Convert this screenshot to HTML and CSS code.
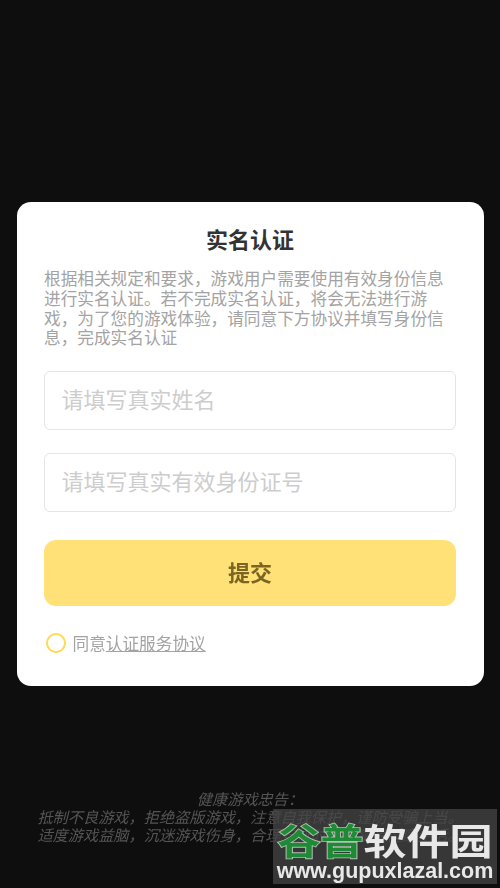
FILE: index.html
```html
<!DOCTYPE html>
<html lang="zh-CN">
<head>
<meta charset="utf-8">
<title>实名认证</title>
<link rel="stylesheet" href="styles.css">
</head>
<body>
<main class="screen">
  <section class="card">
    <h1 class="title">实名认证</h1>
    <p class="intro">根据相关规定和要求，游戏用户需要使用有效身份信息进行实名认证。若不完成实名认证，将会无法进行游戏，为了您的游戏体验，请同意下方协议并填写身份信息，完成实名认证</p>
    <input class="field" type="text" placeholder="请填写真实姓名">
    <input class="field field-second" type="text" placeholder="请填写真实有效身份证号">
    <button class="submit" type="button">提交</button>
    <div class="agree">
      <span class="radio"></span>
      <span>同意<span class="link">认证服务协议</span></span>
    </div>
  </section>
  <footer class="notice">
    <p>健康游戏忠告：</p>
    <p>抵制不良游戏，拒绝盗版游戏，注意自我保护，谨防受骗上当。</p>
    <p>适度游戏益脑，沉迷游戏伤身，合理安排时间，享受健康生活。</p>
  </footer>
</main>
<div class="watermark">
  <div class="wm-name"><span class="wm-green">谷普</span><span class="wm-white">软件园</span></div>
  <div class="wm-url">www.gupuxlazal.com</div>
</div>
</body>
</html>
```
FILE: styles.css
```css
* { box-sizing: border-box; }
html, body { margin: 0; height: 100%; }
body {
  background: #0e0e0e;
  font-family: "Noto Sans CJK SC", "Noto Sans", sans-serif;
  overflow: hidden;
  position: relative;
}
.screen {
  height: 888px;
  padding: 202px 16.5px 0;
  display: flex;
  flex-direction: column;
  filter: blur(0.3px);
}
.card {
  height: 484px;
  background: #fff;
  border-radius: 14px;
  padding: 20px 27.5px 0;
  display: flex;
  flex-direction: column;
}
.title {
  margin: 0;
  font-size: 22px;
  line-height: 32px;
  font-weight: 700;
  color: #333;
  text-align: center;
}
.intro {
  margin: 15px 0 0;
  font-size: 16.67px;
  line-height: 19.8px;
  color: #a3a3a3;
}
.field {
  display: block;
  width: 100%;
  height: 59px;
  margin-top: 23px;
  padding: 0 16.5px 4px;
  border: 1.5px solid #e4e4e4;
  border-radius: 6px;
  background: #fff;
  font-family: inherit;
  font-size: 22px;
  outline: none;
}
.field:first-of-type { margin-top: 22.8px; }
.field::placeholder { color: #cdcdcd; opacity: 1; }
.submit {
  height: 66px;
  margin-top: 28px;
  padding: 0 0 4px;
  border: 0;
  border-radius: 12px;
  background: #ffe177;
  color: #7a6522;
  font-family: inherit;
  font-size: 22px;
  font-weight: 700;
}
.agree {
  margin-top: 27px;
  display: flex;
  align-items: center;
  gap: 7px;
  padding-left: 1.5px;
  font-size: 16.67px;
  line-height: 20px;
  color: #a3a3a3;
}
.radio {
  width: 20px;
  height: 20px;
  border: 2px solid #ffd94f;
  border-radius: 50%;
}
.link { text-decoration: underline; }
.notice {
  margin-top: 103px;
  text-align: center;
  font-size: 15.2px;
  line-height: 18px;
  font-style: italic;
  color: #555;
  white-space: nowrap;
}
.notice p { margin: 0; }
.watermark {
  position: absolute;
  left: 273px;
  top: 809px;
  width: 224px;
  height: 75px;
  background: rgba(70, 70, 70, 0.75);
  overflow: hidden;
  filter: blur(0.3px);
}
.wm-name {
  display: flex;
  justify-content: center;
  height: 40px;
  margin-top: 10px;
  font-size: 43px;
  line-height: 40px;
  font-weight: 700;
  transform: scaleY(0.85);
  white-space: nowrap;
}
.wm-green { color: #1f8a36; -webkit-text-stroke: 2px #b3c2b3; paint-order: stroke fill; }
.wm-white { color: #e8e8e8; }
.wm-url {
  font-family: "Liberation Sans", sans-serif;
  font-size: 21.5px;
  line-height: 24px;
  font-weight: 700;
  color: #e8e8e8;
  text-align: center;
  white-space: nowrap;
}
```
